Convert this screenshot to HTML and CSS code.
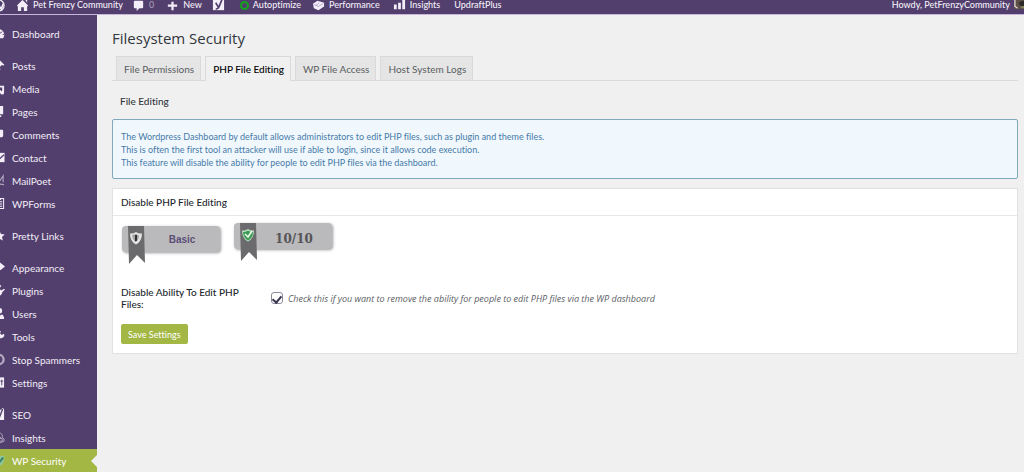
FILE: index.html
```html
<!DOCTYPE html>
<html lang="en">
<head>
<meta charset="utf-8">
<title>Filesystem Security</title>
<link rel="stylesheet" href="styles.css">
</head>
<body>
<header class="topbar">
  <a class="bar-item bar-logo" href="#" aria-label="WordPress"><svg class="icon" viewBox="0 0 14 14"><circle cx="7" cy="7" r="6" fill="none" stroke="currentColor" stroke-width="1.4"/><path d="M3 4l3 7 1.500-4L10 11l2-6M6 4l1.500 3" fill="none" stroke="currentColor" stroke-width="1.700"/></svg></a>
  <a class="bar-item bar-site" href="#"><svg class="icon" viewBox="0 0 14 14"><path d="M7 1l6 6-1 1v5H8.500V9h-3v4H2V8L1 7zM10 1h2v3z" fill="currentColor"/></svg>Pet Frenzy Community</a>
  <a class="bar-item bar-comments" href="#"><svg class="icon" viewBox="0 0 14 14"><path d="M3 2h8q1 0 1 1v6q0 1-1 1H8l-3 3v-3H3q-1 0-1-1V3q0-1 1-1z" fill="currentColor"/></svg><span class="count">0</span></a>
  <a class="bar-item bar-new" href="#"><svg class="icon" viewBox="0 0 14 14"><path d="M5.800 3h2.400v3H12v2.400H8.200V12H5.800V8.400H2V6h3.800z" fill="currentColor"/></svg>New</a>
  <a class="bar-item bar-seo" href="#" aria-label="SEO"><svg class="icon" viewBox="0 0 14 14"><path d="M1 1h12v11H1z" fill="currentColor"/><path d="M4 4l3 5M11 0L7.500 8.500Q6.500 11 4 11" fill="none" stroke="#523f6d" stroke-width="1.800"/></svg></a>
  <a class="bar-item bar-auto" href="#"><span class="ring"></span>Autoptimize</a>
  <a class="bar-item bar-perf" href="#"><svg class="icon" viewBox="0 0 14 14"><path d="M1 5l5-3 7 2v4l-6 4-5-2z" fill="currentColor"/><path d="M2 6l5 2 5-3M4 7l4-3" stroke="#b6a5c8" fill="none"/></svg>Performance</a>
  <a class="bar-item bar-insights" href="#"><svg class="icon" viewBox="0 0 14 14"><path d="M1 6h3v5H1zM5.500 4h3v7h-3zM10 0h3v11h-3z" fill="currentColor"/></svg>Insights</a>
  <a class="bar-item bar-updraft" href="#">UpdraftPlus</a>
  <a class="bar-item bar-user" href="#">Howdy, PetFrenzyCommunity<svg class="icon" viewBox="0 0 14 14"><path d="M0 0h14v11H0z" fill="#5d5049"/><path d="M1 0v8l3 2" stroke="#d8cfc9" stroke-width="1.500" fill="none"/><path d="M5 4q4-3 9-2v7H8z" fill="#2d2928"/><path d="M7 8l6-1v3H8z" fill="#86885a"/></svg></a>
</header>
<div class="layout">
  <nav class="sidebar" aria-label="Main menu">
    <div class="menu-group">
      <a class="menu-item" href="#"><svg class="icon" viewBox="0 0 14 14"><path d="M2 12a6.200 6.200 0 1 1 10 0z" fill="currentColor"/><path d="M7 8l4-3M7 2v2M11.500 8H13" stroke="#523f6d"/></svg>Dashboard</a>
    </div>
    <div class="menu-group">
      <a class="menu-item" href="#"><svg class="icon" viewBox="0 0 14 14"><path d="M8 1l5.500 5.500-1.500.5-1.500-.5-2 2 .5 3-1 1-3-3L1 13l3-4.500-3-3 1-1 3 .5 3-2z" fill="currentColor"/></svg>Posts</a>
      <a class="menu-item" href="#"><svg class="icon" viewBox="0 0 14 14"><path d="M1 2h7v7H1zM8 4h5v7.500a2 2 0 1 1-2-2V6H8z" fill="currentColor"/><circle cx="8" cy="10.500" r="2" fill="currentColor"/></svg>Media</a>
      <a class="menu-item" href="#"><svg class="icon" viewBox="0 0 14 14"><path d="M4 1h8v9H4zM2 4h1v7h7v2H2z" fill="currentColor"/></svg>Pages</a>
      <a class="menu-item" href="#"><svg class="icon" viewBox="0 0 14 14"><path d="M2 2h9q1 0 1 1v5q0 2-2 2H7l-3 3v-3H2z" fill="currentColor"/></svg>Comments</a>
      <a class="menu-item" href="#"><svg class="icon" viewBox="0 0 14 14"><path d="M1 2h12.500v10H1z" fill="currentColor"/><path d="M1 3l6.500 6L13 4" stroke="#523f6d" stroke-width="1.300" fill="none"/></svg>Contact</a>
      <a class="menu-item" href="#"><svg class="icon dim" viewBox="0 0 14 14"><path d="M4 9l2-7 2 6 4-6v7M3 12q5-2 10-.5" stroke="currentColor" stroke-width="1.200" fill="none"/></svg>MailPoet</a>
      <a class="menu-item" href="#"><svg class="icon" viewBox="0 0 14 14"><path d="M2 1.500h10.500v11H2zM4 5h7M4 7.500h7M4 10h7M5 2l2 2 3-2" stroke="currentColor" stroke-width="1.100" fill="none"/></svg>WPForms</a>
    </div>
    <div class="menu-group">
      <a class="menu-item" href="#"><svg class="icon" viewBox="0 0 14 14"><path d="M8 2l1.700 3.500 4 .5-3 2.500 1 4L8 10.500 4.500 12.500l1-4-3-2.500 4-.5z" fill="currentColor"/></svg>Pretty Links</a>
    </div>
    <div class="menu-group">
      <a class="menu-item" href="#"><svg class="icon" viewBox="0 0 14 14"><path d="M8 1l6 5-5 4-3-4zM6 7l2 3-5 3-2-2z" fill="currentColor"/></svg>Appearance</a>
      <a class="menu-item" href="#"><svg class="icon" viewBox="0 0 14 14"><path d="M9 1l1 1-2 3 2 2 3-2 1 1-3 3q0 3-3 4-3 0-4-1l-2 1V7q2-4 4-3z" fill="currentColor"/></svg>Plugins</a>
      <a class="menu-item" href="#"><svg class="icon" viewBox="0 0 14 14"><circle cx="8" cy="4" r="3" fill="currentColor"/><path d="M2 13q0-5 4-5l2 2 2-2q3 0 3 5z" fill="currentColor"/></svg>Users</a>
      <a class="menu-item" href="#"><svg class="icon" viewBox="0 0 14 14"><path d="M10 1L8.500 3.500l2 2L13 4q1 4-3 5-2 0-3-1l-4 5-2-2 5-4q-1-5 4-6z" fill="currentColor"/></svg>Tools</a>
      <a class="menu-item" href="#"><svg class="icon dim" viewBox="0 0 14 14"><circle cx="7.500" cy="7" r="5" fill="none" stroke="currentColor" stroke-width="2.500"/></svg>Stop Spammers</a>
      <a class="menu-item" href="#"><svg class="icon" viewBox="0 0 14 14"><path d="M1 1.500h12v11H1z" fill="currentColor"/><path d="M10.500 4v6M9 5.500h3" stroke="#523f6d"/></svg>Settings</a>
    </div>
    <div class="menu-group">
      <a class="menu-item" href="#"><svg class="icon" viewBox="0 0 14 14"><path d="M1 2h9l1-2 2 1v12H1z" fill="currentColor"/><path d="M6 5l2 3M11.500 1L8 10" stroke="#523f6d" stroke-width="1.500"/></svg>SEO</a>
      <a class="menu-item" href="#"><svg class="icon dim" viewBox="0 0 14 14"><path d="M3 6q2-5 6-4 3 2 2 5 3 1 2 4-4 3-9 1M7 5l3 3M8 8h3v3H8z" stroke="currentColor" fill="none"/></svg>Insights</a>
      <a class="menu-item current" href="#" aria-current="page"><svg class="icon" viewBox="0 0 14 14"><path d="M2 2q4 1 6-1 2 2 5 1 1 8-5 11-6-2-6-11z" fill="#8cc7a0"/><path d="M4 6l3 4 5-6" stroke="#377f60" stroke-width="2" fill="none"/></svg>WP Security</a>
    </div>
  </nav>
  <main class="content">
    <h1 class="page-title">Filesystem Security</h1>
    <nav class="tabs" aria-label="Filesystem sections">
      <a class="tab" href="#">File Permissions</a>
      <a class="tab active" href="#" aria-current="page">PHP File Editing</a>
      <a class="tab" href="#">WP File Access</a>
      <a class="tab" href="#">Host System Logs</a>
    </nav>
    <h2 class="section-title">File Editing</h2>
    <div class="notice">
      <p>The Wordpress Dashboard by default allows administrators to edit PHP files, such as plugin and theme files.</p>
      <p>This is often the first tool an attacker will use if able to login, since it allows code execution.</p>
      <p>This feature will disable the ability for people to edit PHP files via the dashboard.</p>
    </div>
    <section class="panel">
      <h3 class="panel-title">Disable PHP File Editing</h3>
      <form class="panel-body">
        <div class="badges">
          <div class="badge badge-level"><svg class="ribbon" viewBox="0 0 17 39"><path d="M0 0h16l1 37-8-8-8 9z" fill="#6b6b6d"/><path d="M8 6q3 2 6 1.500 0 8-6 11-6-3-6-11Q5 8 8 6z" fill="#e4e4e4"/><path d="M8 8v8.500Q4.500 14 4 9zM8 8l3 1.500q0 4-3 6z" fill="#a5a5a5"/><path d="M7 9h2v6H7z" fill="#303030"/></svg><span>Basic</span></div>
          <div class="badge badge-score"><svg class="ribbon" viewBox="0 0 17 39"><path d="M0 0h16l1 37-8-8-8 9z" fill="#6b6b6d"/><path d="M8 6q3 2 6 1.500 0 8-6 11-6-3-6-11Q5 8 8 6z" fill="#b9dfc0"/><path d="M8 7.500q2 1.500 5 1.500 0 6-5 8.500Q3.500 15 3 9q3 0 5-1.500z" fill="#3f9a55"/><path d="M5 11l3 3 4-6" stroke="#e7fbe9" stroke-width="1.600" fill="none"/></svg><span>10/10</span></div>
        </div>
        <div class="field">
          <label class="field-label" for="disable-editing">Disable Ability To Edit PHP Files:</label>
          <div class="field-control">
            <input class="check" type="checkbox" id="disable-editing" aria-describedby="disable-help" checked>
            <span class="help" id="disable-help">Check this if you want to remove the ability for people to edit PHP files via the WP dashboard</span>
          </div>
        </div>
        <button class="save" type="button">Save Settings</button>
      </form>
    </section>
  </main>
</div>
</body>
</html>
```
FILE: styles.css
```css
* { box-sizing: border-box; }
body {
  margin: 0;
  min-height: 100vh;
  display: flex;
  flex-direction: column;
  background: #f0f0f1;
  color: #32373c;
  font-family: Lato, "Open Sans", sans-serif;
  font-size: 10px;
  font-variant-ligatures: none;
}
h1, h2, h3, p { margin: 0; }
a { color: inherit; text-decoration: none; }
.icon { width: 13px; height: 13px; flex: none; }
.dim { opacity: 0.6; }

.topbar {
  display: flex;
  align-items: flex-start;
  height: 15px;
  overflow: hidden;
  background: #523f6d;
  border-bottom: 1px solid #c9b5d9;
  color: #f3eef8;
  font-size: 9px;
  font-weight: 500;
  line-height: 10px;
}
.bar-item {
  display: flex;
  align-items: center;
  gap: 4px;
  height: 10px;
  white-space: nowrap;
}
.bar-logo { margin-left: -8px; }
.bar-site { margin-left: 11px; }
.bar-comments { margin-left: 9px; }
.bar-new { margin-left: 12px; }
.bar-seo { margin-left: 10px; }
.bar-auto { margin-left: 15px; }
.bar-perf { margin-left: 11px; }
.bar-insights { margin-left: 13px; }
.bar-updraft { margin-left: 14px; }
.bar-user { margin-left: auto; margin-right: -3px; }
.count { opacity: 0.5; }
.ring { width: 9px; height: 9px; border: 2px solid #12a51d; border-radius: 50%; }

.layout { display: flex; flex: 1; }
.sidebar {
  display: flex;
  flex-direction: column;
  gap: 9px;
  flex: none;
  width: 97px;
  padding-top: 7px;
  background: #523f6d;
  color: #f3eef8;
  overflow: hidden;
}
.menu-item {
  position: relative;
  display: flex;
  align-items: center;
  gap: 7px;
  height: 23px;
  padding-left: 6px;
  white-space: nowrap;
}
.menu-item .icon { margin-left: -14px; }
.current { background: #a3b745; color: #fff; }
.current::after {
  content: "";
  position: absolute;
  right: 0;
  top: 6px;
  border: 6px solid transparent;
  border-left-width: 0;
  border-right-color: #f0f0f1;
}

.content { flex: 1; min-width: 0; padding: 12px 6px 0 15px; }
.page-title { font-family: "Open Sans", sans-serif; font-size: 15px; font-weight: 400; line-height: 23px; }
.tabs {
  display: flex;
  gap: 4px;
  margin-top: 6px;
  padding-left: 4px;
  border-bottom: 1px solid #dadadb;
}
.tab {
  height: 24px;
  padding: 0 6px 0 7px;
  border: 1px solid #d9d9da;
  border-bottom: 0;
  background: #e5e5e5;
  color: #5a5e62;
  line-height: 24px;
  white-space: nowrap;
}
.tab.active { height: 25px; margin-bottom: -1px; background: #f0f0f1; color: #000; font-weight: 500; }
.section-title { margin-top: 11px; padding-left: 8px; font-size: 10px; font-weight: 500; line-height: 18px; }
.notice {
  margin-top: 9px;
  padding: 10px 8px 9px;
  border: 1px solid #7fa9bd;
  border-radius: 2px;
  background: #f0f8fe;
  color: #477aa8;
  font-size: 9px;
  line-height: 13px;
}
.panel { margin-top: 9px; border: 1px solid #dfe1e4; background: #fff; }
.panel-title {
  padding: 0 8px;
  border-bottom: 1px solid #e8e8ea;
  font-size: 10px;
  font-weight: 500;
  line-height: 26px;
  color: #23282d;
}
.panel-body { padding: 7px 8px 9px; }
.badges { display: flex; gap: 14px; height: 42px; padding-left: 1px; }
.badge {
  position: relative;
  display: flex;
  align-items: center;
  justify-content: center;
  width: 98px;
  height: 26px;
  padding-left: 22px;
  border-radius: 4px;
  background: #bababc;
  box-shadow: 1px 1px 3px #999;
}
.badge-level { margin-top: 3px; color: #5a4f77; font: bold 10px "Liberation Sans", sans-serif; }
.badge-score { padding-top: 5px; color: #555557; font: bold 12px "DejaVu Serif", serif; }
.ribbon { position: absolute; left: 6px; top: 0; width: 17px; height: 39px; }
.field { display: flex; align-items: center; margin-top: 21px; }
.field-label { flex: none; width: 150px; padding-right: 24px; font-weight: 500; line-height: 12px; color: #23282d; }
.field-control { display: flex; align-items: center; gap: 5px; }
.check {
  appearance: none;
  width: 12px;
  height: 12px;
  margin: 0;
  border: 1px solid #8d8a9c;
  border-radius: 3px;
  background: #fff;
  display: grid;
  place-items: center;
}
.check:checked::before {
  content: "";
  width: 4px;
  height: 7px;
  border: solid #3b3650;
  border-width: 0 2px 2px 0;
  transform: rotate(40deg);
}
.help { color: #5b6065; font-family: "Open Sans", sans-serif; font-style: italic; font-size: 9px; }
.save {
  height: 20px;
  margin-top: 14px;
  padding: 0 7px;
  border: 0;
  border-radius: 2px;
  background: #a3b745;
  color: #fff;
  font: inherit;
  font-size: 9px;
}
```
